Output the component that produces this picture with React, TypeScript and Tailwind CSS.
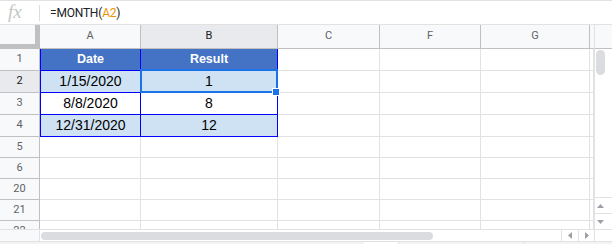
import React from 'react';

const COLS = [
  { key: 'A', w: 'w-[101px]' },
  { key: 'B', w: 'w-[137px]' },
  { key: 'C', w: 'w-[102px]' },
  { key: 'F', w: 'w-[101px]' },
  { key: 'G', w: 'w-[109px]' },
];

const ROWS = [
  { n: 1, h: 'h-[22px]' },
  { n: 2, h: 'h-[22px]' },
  { n: 3, h: 'h-[22px]' },
  { n: 4, h: 'h-[22px]' },
  { n: 5, h: 'h-[21px]' },
  { n: 6, h: 'h-[21px]' },
  { n: 20, h: 'h-[21px]' },
  { n: 21, h: 'h-[21px]' },
  { n: 22, h: 'h-[21px]' },
];

const DATA: Record<number, string[]> = {
  1: ['Date', 'Result'],
  2: ['1/15/2020', '1'],
  3: ['8/8/2020', '8'],
  4: ['12/31/2020', '12'],
};

const rowFill = (n: number) => {
  if (n === 1) return 'bg-[#4472c4] text-white font-bold text-[12.5px]';
  if (n === 3) return 'bg-white text-black text-[14px]';
  return 'bg-[#cfe2f3] text-black text-[14px]';
};

const Arrow = ({ dir }: { dir: 'up' | 'down' | 'left' | 'right' }) => {
  const pts = {
    up: '0,5 7,5 3.5,1',
    down: '0,1 7,1 3.5,5',
    left: '5,0 5,7 1,3.5',
    right: '1,0 1,7 5,3.5',
  }[dir];
  const size = dir === 'up' || dir === 'down' ? { width: 7, height: 6 } : { width: 6, height: 7 };
  return (
    <svg {...size} viewBox={dir === 'up' || dir === 'down' ? '0 0 7 6' : '0 0 6 7'}>
      <polygon points={pts} fill="#9aa0a6" />
    </svg>
  );
};

function GridRow({ n, h }: { n: number; h: string }) {
  const data = DATA[n];
  return (
    <div className={`flex ${h}`}>
      <div
        className={`w-[40px] shrink-0 flex items-center justify-center border-r border-b border-[#c0c0c0] font-['Roboto'] text-[11px] ${
          n === 2 ? 'bg-[#e8eaed] text-[#202124]' : 'bg-[#f8f9fa] text-[#5f6368]'
        }`}
      >
        {n}
      </div>
      {COLS.map((c, i) => {
        if (data && i < 2) {
          return (
            <div
              key={c.key}
              className={`${c.w} shrink-0 flex items-center justify-center border-r border-b border-[#0000ff] ${
                i === 0 ? 'border-l' : ''
              } ${rowFill(n)}`}
            >
              {data[i]}
            </div>
          );
        }
        return <div key={c.key} className={`${c.w} shrink-0 border-r border-b border-[#e2e2e2] bg-white`} />;
      })}
      <div className="w-[4px] shrink-0 border-r border-b border-[#e2e2e2] bg-white" />
    </div>
  );
}

export default function App() {
  return (
    <div className="w-[612px] h-[244px] overflow-hidden bg-white font-['Liberation_Sans',Arial,sans-serif] flex flex-col">
      {/* formula bar */}
      <div className="h-[25px] shrink-0 flex items-center border-t border-b border-[#e2e2e2]">
        <div className="w-[39px] pl-[8px] font-['Liberation_Serif',serif] italic text-[19px] leading-none text-[#c4c7c5] -mt-[2px]">
          fx
        </div>
        <div className="w-px h-[16px] bg-[#dadce0]" />
        <div className="pl-[10px] font-['Roboto',sans-serif] text-[12px] text-[#202124] tracking-[-0.2px]">
          =MONTH(<span className="text-[#f09300]">A2</span>)
        </div>
      </div>

      {/* grid + vertical scrollbar */}
      <div className="flex h-[204px] shrink-0">
        <div className="relative w-[594px] shrink-0 overflow-hidden">
          {/* column headers */}
          <div className="flex h-[24px] font-['Roboto',sans-serif] text-[11px]">
            <div className="w-[40px] shrink-0 bg-[#f8f9fa] border-r-[5px] border-b-[5px] border-[#c0c0c0]" />
            {COLS.map((c) => (
              <div
                key={c.key}
                className={`${c.w} shrink-0 flex items-center justify-center border-r border-b border-[#c0c0c0] ${
                  c.key === 'B' ? 'bg-[#e8eaed] text-[#202124]' : 'bg-[#f8f9fa] text-[#5f6368]'
                }`}
              >
                {c.key}
              </div>
            ))}
            <div className="w-[4px] shrink-0 bg-[#f8f9fa] border-b border-[#c0c0c0]" />
          </div>

          <div className="h-[180px] overflow-hidden">
            {ROWS.map((r) => (
              <GridRow key={r.n} n={r.n} h={r.h} />
            ))}
          </div>

          {/* selection on B2 */}
          <div className="absolute left-[140px] top-[44px] w-[138px] h-[24px] border-2 border-[#1a73e8]" />
          <div className="absolute left-[272px] top-[63px] w-[8px] h-[8px] bg-[#1a73e8] border border-white" />
        </div>

        <div className="w-[18px] shrink-0 flex flex-col border-l border-[#e2e2e2]">
          <div className="h-[24px] shrink-0 bg-[#f8f9fa] border-b border-[#c0c0c0]" />
          <div className="flex-1 bg-white pt-[1px] pl-[1px]">
            <div className="w-[9px] h-[25px] rounded-full bg-[#dadce0]" />
          </div>
          <div className="h-[16px] shrink-0 border-t border-[#e2e2e2] flex items-center pl-[2px]">
            <Arrow dir="up" />
          </div>
          <div className="h-[16px] shrink-0 border-t border-[#e2e2e2] flex items-center pl-[2px]">
            <Arrow dir="down" />
          </div>
        </div>
      </div>

      {/* horizontal scrollbar */}
      <div className="h-[12px] shrink-0 flex border-t border-[#e2e2e2]">
        <div className="w-[40px] shrink-0 bg-[#f8f9fa] border-r border-[#e2e2e2]" />
        <div className="w-[521px] shrink-0 pl-[1px] pt-[2px]">
          <div className="w-[392px] h-[8px] rounded-full bg-[#dadce0]" />
        </div>
        <div className="w-[17px] shrink-0 border-l border-[#e2e2e2] flex items-center justify-center">
          <Arrow dir="left" />
        </div>
        <div className="w-[16px] shrink-0 border-l border-[#e2e2e2] flex items-center justify-center">
          <Arrow dir="right" />
        </div>
        <div className="flex-1 border-l border-[#e2e2e2]" />
      </div>

      {/* sheet tab strip */}
      <div className="flex-1 flex bg-[#f1f3f4] border-t border-[#e2e2e2]">
        <div className="w-[364px] shrink-0" />
        <div className="w-[34px] shrink-0 bg-white" />
        <div className="w-[125px] shrink-0 border-l border-[#e2e2e2]" />
        <div className="flex-1 border-l border-[#e2e2e2]" />
      </div>
    </div>
  );
}
